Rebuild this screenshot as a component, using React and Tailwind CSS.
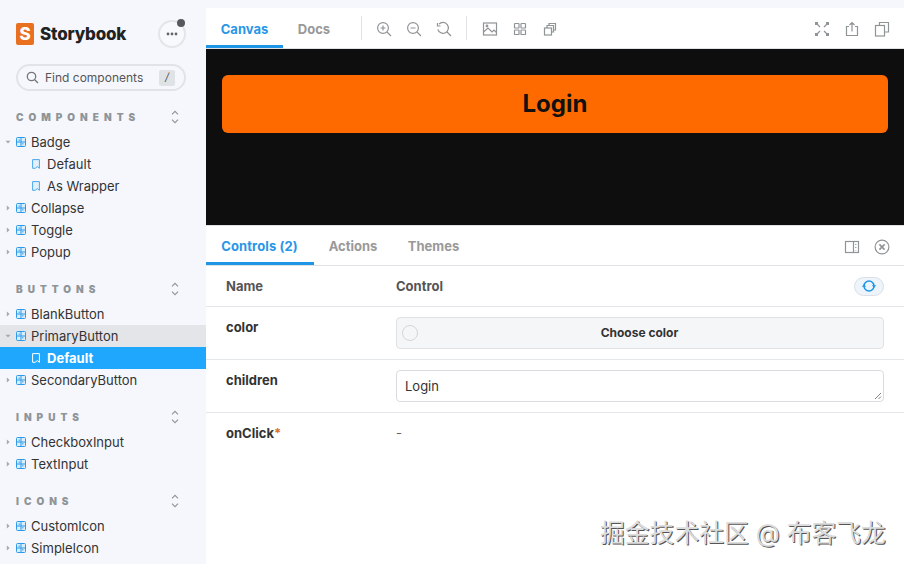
import React from "react";

const Chevron = ({ open }) => (
  <svg width="6" height="6" viewBox="0 0 6 6" className="shrink-0">
    {open ? <path d="M0.5 1.8H5.5L3 4.6Z" fill="#a3a9ad" /> : <path d="M1.8 0.5V5.5L4.6 3Z" fill="#a3a9ad" />}
  </svg>
);

const ComponentIcon = () => (
  <svg width="10" height="10" viewBox="0 0 10 10" className="shrink-0">
    <rect x="0.5" y="0.5" width="9" height="9" rx="1" fill="#d9edfb" stroke="#2f9be8" />
    <path d="M5 1V9M1 5H9" stroke="#2f9be8" strokeWidth="1" />
    <rect x="2.6" y="2.6" width="1.2" height="1.2" fill="#2f9be8" />
    <rect x="6.2" y="6.2" width="1.2" height="1.2" fill="#2f9be8" />
  </svg>
);

const BookmarkIcon = ({ active }) => (
  <svg width="8" height="10" viewBox="0 0 8 10" className="shrink-0">
    <path
      d="M0.6 0.6H7.4V9.3L5.2 7.6L3.2 9.3H0.6Z"
      fill={active ? "none" : "#e2f1fc"}
      stroke={active ? "#ffffff" : "#4aa8ea"}
      strokeWidth="1"
    />
  </svg>
);

const Expand = () => (
  <svg width="8" height="14" viewBox="0 0 8 14" fill="none" stroke="#8f9497" strokeWidth="1.1">
    <path d="M1 4.4L4 1.3L7 4.4M1 9.6L4 12.7L7 9.6" />
  </svg>
);

const SectionHead = ({ title, className = "" }) => (
  <div className={`flex h-[14px] items-center justify-between pl-4 pr-[27px] ${className}`}>
    <span className="text-[10px] font-black leading-none tracking-[0.5em] text-[#8f9497]">{title}</span>
    <Expand />
  </div>
);

const Row = ({ label, open }) => (
  <div className="flex h-[22px] items-center pl-[5px]">
    <Chevron open={open} />
    <span className="ml-[5px]"><ComponentIcon /></span>
    <span className="ml-[5px] text-[13px] leading-none text-[#333]">{label}</span>
  </div>
);

const Leaf = ({ label }) => (
  <div className="flex h-[22px] items-center pl-8">
    <BookmarkIcon />
    <span className="ml-[7px] text-[13px] leading-none text-[#333]">{label}</span>
  </div>
);

const Sidebar = () => (
  <aside className="flex h-full w-[206px] shrink-0 flex-col overflow-hidden bg-[#f5f7fd]">
    <div className="mt-[14px] flex h-[40px] items-center justify-between pl-4 pr-5">
      <div className="flex items-center">
        <div className="flex h-[22px] w-[18px] items-center justify-center rounded-[2px] bg-[#e8701e] text-[17px] font-extrabold leading-none text-white">S</div>
        <span className="ml-[6px] text-[17px] font-extrabold leading-none tracking-[-0.2px] text-[#222]">Storybook</span>
      </div>
      <div className="relative flex h-[28px] w-[28px] items-center justify-center rounded-full border-2 border-[#e3e5e8] bg-[#f8f9fd]">
        <svg width="12" height="4" viewBox="0 0 12 4"><g fill="#666"><circle cx="2" cy="2" r="1.4" /><circle cx="6" cy="2" r="1.4" /><circle cx="10" cy="2" r="1.4" /></g></svg>
        <span className="absolute right-[-1px] top-[-3px] h-2 w-2 rounded-full bg-[#55585c]" />
      </div>
    </div>
    <div className="ml-4 mr-5 mt-[10px] flex h-[27px] items-center rounded-full border-2 border-[#e1e3e8] pl-[8px] pr-[9px]">
      <svg width="13" height="13" viewBox="0 0 13 13" fill="none" stroke="#777" strokeWidth="1.3">
        <circle cx="5.5" cy="5.5" r="4.2" />
        <path d="M8.7 8.7L12 12" />
      </svg>
      <span className="ml-[6px] flex-1 text-[12px] leading-none text-[#555]">Find components</span>
      <span className="flex h-[16px] w-[16px] items-center justify-center rounded-[2px] bg-[#dfe3e6] text-[11px] italic leading-none text-[#555]">/</span>
    </div>
    <SectionHead title="COMPONENTS" className="mt-[19px]" />
    <div className="mt-[7px]">
      <Row label="Badge" open />
      <Leaf label="Default" />
      <Leaf label="As Wrapper" />
      <Row label="Collapse" />
      <Row label="Toggle" />
      <Row label="Popup" />
    </div>
    <SectionHead title="BUTTONS" className="mt-[19px]" />
    <div className="mt-[7px]">
      <Row label="BlankButton" />
      <div className="bg-[#e3e5e9]"><Row label="PrimaryButton" open /></div>
      <div className="flex h-[22px] items-center bg-[#1ea7fd] pl-8">
        <BookmarkIcon active />
        <span className="ml-[7px] text-[13px] font-bold leading-none text-white">Default</span>
      </div>
      <Row label="SecondaryButton" />
    </div>
    <SectionHead title="INPUTS" className="mt-[19px]" />
    <div className="mt-[7px]">
      <Row label="CheckboxInput" />
      <Row label="TextInput" />
    </div>
    <SectionHead title="ICONS" className="mt-[19px]" />
    <div className="mt-[7px]">
      <Row label="CustomIcon" />
      <Row label="SimpleIcon" />
    </div>
  </aside>
);

const Tool = ({ children, className = "" }) => (
  <svg width="16" height="16" viewBox="0 0 16 16" fill="none" stroke="#8f9497" strokeWidth="1.2" className={`shrink-0 ${className}`}>
    {children}
  </svg>
);

const Toolbar = () => (
  <div className="flex h-[41px] items-stretch border-b border-[#dfe2e5] bg-white">
    <div className="flex w-[77px] items-center justify-center border-b-[3px] border-[#1f95e6] pt-[5px] text-[13px] font-bold leading-none text-[#2a96e6]">Canvas</div>
    <div className="flex w-[62px] items-center justify-center pt-[2px] text-[13px] font-bold leading-none text-[#999]">Docs</div>
    <div className="ml-[16px] mt-[8px] h-[24px] w-px bg-[#dfe2e5]" />
    <div className="ml-[14px] flex items-center gap-[14px] pt-[2px]">
      <Tool><circle cx="7" cy="7" r="5.4" /><path d="M11 11L15 15M7 4.5V9.5M4.5 7H9.5" /></Tool>
      <Tool><circle cx="7" cy="7" r="5.4" /><path d="M11 11L15 15M4.5 7H9.5" /></Tool>
      <Tool><path d="M3 3.2A5.4 5.4 0 1 1 1.8 8.4M11 11L15 15" /><path d="M1.5 2V5H4.5" /></Tool>
    </div>
    <div className="ml-[14px] mt-[8px] h-[24px] w-px bg-[#dfe2e5]" />
    <div className="ml-[15px] flex items-center gap-[14px] pt-[2px]">
      <Tool><rect x="1.5" y="2" width="13" height="12" /><path d="M1.5 11L6 7L10 11L12 9L14.5 11.5" /><circle cx="5" cy="5" r="0.8" /></Tool>
      <Tool><rect x="2.5" y="2.5" width="4.5" height="4.5" rx="0.6" /><rect x="9" y="2.5" width="4.5" height="4.5" rx="0.6" /><rect x="2.5" y="9" width="4.5" height="4.5" rx="0.6" /><rect x="9" y="9" width="4.5" height="4.5" rx="0.6" /></Tool>
      <Tool><rect x="2.5" y="7" width="7" height="7" /><path d="M5 7V4.5H11.5V11H9.5M7 4.5V2.5H13.5V9H11.5" /></Tool>
    </div>
    <div className="ml-auto mr-[14px] flex items-center gap-[14px] pt-[2px]">
      <Tool><path d="M2 2L6 6M14 2L10 6M2 14L6 10M14 14L10 10" /><g fill="#8f9497" stroke="none"><rect x="1" y="1" width="3" height="3" /><rect x="12" y="1" width="3" height="3" /><rect x="1" y="12" width="3" height="3" /><rect x="12" y="12" width="3" height="3" /></g></Tool>
      <Tool><path d="M5 5.5H2.5V14.5H13.5V5.5H11M8 10.5V1.5M5.5 4L8 1.5L10.5 4" /></Tool>
      <Tool><path d="M5.5 4.5V1.5H14.5V11H10.5" /><rect x="1.5" y="4.5" width="9" height="10.5" /></Tool>
    </div>
  </div>
);

const PanelTabs = () => (
  <div className="flex h-[40px] items-stretch border-b border-[#dfe2e5]">
    <div className="flex w-[108px] items-center justify-center border-b-[3px] border-[#1f95e6] pr-[1px] pt-[5px] text-[13px] font-bold leading-none tracking-[0.1px] text-[#2a96e6]">Controls (2)</div>
    <div className="flex w-[78px] items-center justify-center pt-[2px] text-[13px] font-bold leading-none text-[#999]">Actions</div>
    <div className="flex w-[78px] items-center justify-center pl-[5px] pt-[2px] text-[13px] font-bold leading-none text-[#999]">Themes</div>
    <div className="ml-auto mr-[14px] flex items-center gap-[14px] pt-[2px]">
      <Tool><rect x="1.5" y="2.5" width="13" height="11" /><path d="M9.5 2.5V13.5M11.8 5V6M11.8 8V9M11.8 11V11.5" /></Tool>
      <Tool><circle cx="8" cy="8" r="6.9" /><path d="M5.4 5.4L10.6 10.6M10.6 5.4L5.4 10.6" strokeWidth="1.6" /></Tool>
    </div>
  </div>
);

const Name = ({ children }) => (
  <div className="w-[190px] shrink-0 pl-5 text-[13px] font-bold leading-none text-[#333]">{children}</div>
);

const Controls = () => (
  <div className="flex-1">
    <div className="flex h-[41px] items-center border-b border-[#e4e7ea]">
      <Name><span className="text-[#555]">Name</span></Name>
      <div className="text-[13px] font-bold leading-none text-[#555]">Control</div>
      <div className="ml-auto mr-[20px] flex h-[19px] w-[30px] items-center justify-center rounded-full border border-[#dcdfe3] bg-[#edf4fb]">
        <svg width="14" height="14" viewBox="0 0 14 14" fill="none" stroke="#1f95e6" strokeWidth="1.5">
          <circle cx="7" cy="7" r="5" />
          <path d="M10.6 6.2L12 8L13.4 6.2M0.6 7.8L2 6L3.4 7.8" strokeWidth="1.2" />
        </svg>
      </div>
    </div>
    <div className="flex h-[53px] items-start border-b border-[#e4e7ea] pt-[14px]">
      <Name>color</Name>
      <div className="mr-5 -mt-[4px] flex h-[32px] flex-1 items-center rounded-[4px] border border-[#dfe2e5] bg-[#f5f6f8] pl-[5px]">
        <span className="h-4 w-4 shrink-0 rounded-full border border-[#d3d6da] bg-[#f5f6f8]" />
        <span className="flex-1 pr-[22px] text-center text-[12px] font-bold leading-none text-[#333]">Choose color</span>
      </div>
    </div>
    <div className="flex h-[53px] items-start border-b border-[#e4e7ea] pt-[14px]">
      <Name>children</Name>
      <div className="relative mr-5 -mt-[4px] flex h-[32px] flex-1 items-center rounded-[4px] border border-[#d8dbdf] bg-white pl-[8px] text-[13px] leading-none text-[#333]">
        Login
        <svg width="8" height="8" viewBox="0 0 8 8" className="absolute bottom-[1px] right-[1px]" stroke="#666" strokeWidth="0.8"><path d="M1 7L7 1M4.5 7L7 4.5" /></svg>
      </div>
    </div>
    <div className="flex items-start pt-[14px]">
      <Name>onClick<span className="text-[#d9742a]">*</span></Name>
      <div className="text-[13px] leading-none text-[#666]">-</div>
    </div>
  </div>
);

export default function App() {
  return (
    <div className="relative flex h-[564px] w-[904px] overflow-hidden bg-white font-['Inter','Noto_Sans_CJK_SC',sans-serif]">
      <Sidebar />
      <main className="flex min-w-0 flex-1 flex-col bg-white">
        <div className="h-[8px] bg-[#f5f7fd]" />
        <Toolbar />
        <div className="h-[176px] bg-[#0e0e0e] px-4 pt-[26px]">
          <div className="flex h-[58px] items-center justify-center rounded-[6px] bg-[#ff6a00] text-[24px] font-bold leading-none text-[#111]">Login</div>
        </div>
        <div className="border-t border-[#dfe2e5]" />
        <PanelTabs />
        <Controls />
      </main>
      <div className="absolute left-[600px] top-[518px] whitespace-nowrap text-[24.8px] leading-[30px] text-[#dcdcdc] [text-shadow:1px_1px_0.5px_#555]">
        掘金技术社区 @ 布客飞龙
      </div>
    </div>
  );
}
